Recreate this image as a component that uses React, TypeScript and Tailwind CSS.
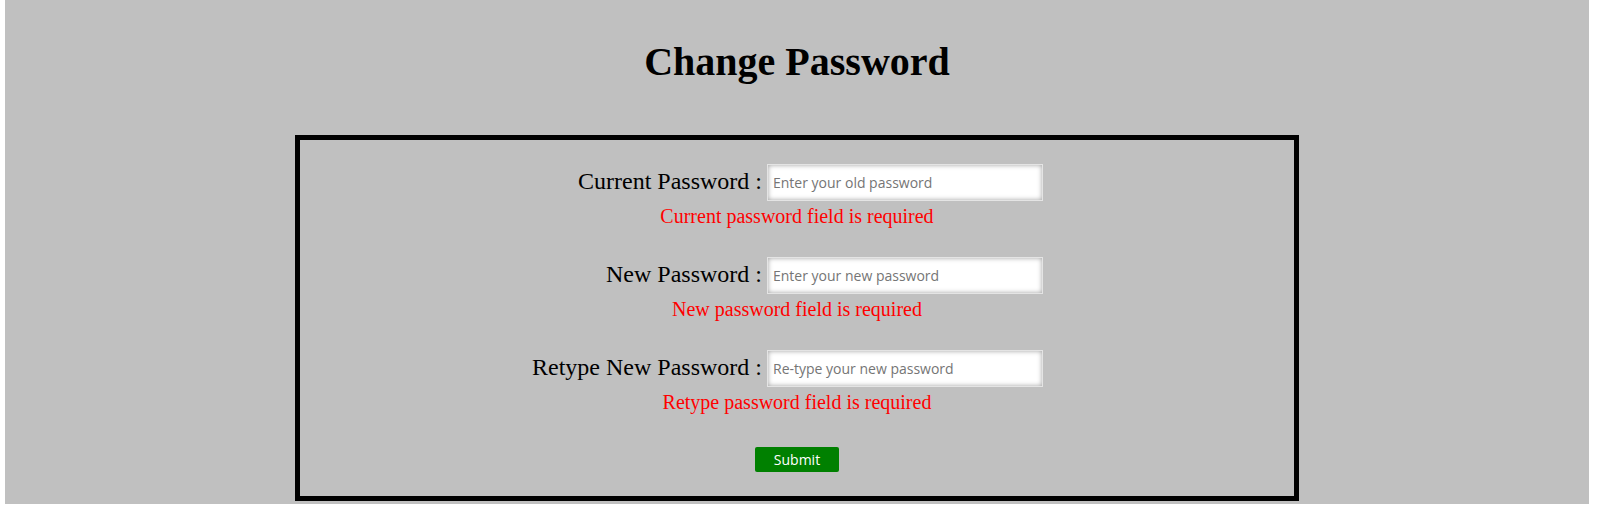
export default function App() {
  const fields = [
    { label: 'Current Password :', placeholder: 'Enter your old password', error: 'Current password field is required' },
    { label: 'New Password :', placeholder: 'Enter your new password', error: 'New password field is required' },
    { label: 'Retype New Password :', placeholder: 'Re-type your new password', error: 'Retype password field is required' },
  ]

  return (
    <div className="bg-white pl-[5px] pr-[8px]">
      <div className="bg-[#c0c0c0] pt-[39px] pb-[3px] font-['Liberation_Serif',serif] text-black">
        <h1 className="text-center text-[40px] font-bold leading-[46px]">Change Password</h1>

        <form className="mx-auto mt-[50px] w-[1004px] border-[5px] border-black pt-[24px] pb-[24px]">
          {fields.map((f, i) => (
            <div key={f.label} className={i > 0 ? 'mt-[29px]' : ''}>
              <div className="flex items-center">
                <label className="w-[462px] pb-[3px] text-right text-[24px] leading-[27px]">{f.label}</label>
                <input
                  type="password"
                  placeholder={f.placeholder}
                  className="ml-[5px] h-[37px] w-[276px] border border-[#e4e4e4] bg-white pl-[5px] font-['Open_Sans',sans-serif] text-[14px] shadow-[inset_0_0_5px_#a0a0a0] outline-none placeholder:text-[#757575]"
                />
              </div>
              <p className="mt-[4px] text-center text-[20px] leading-[23px] text-[#ff0000]">{f.error}</p>
            </div>
          ))}

          <div className="mt-[33px] flex justify-center">
            <button
              type="button"
              className="h-[25px] w-[84px] rounded-[2px] bg-[#008000] font-['Open_Sans',sans-serif] text-[14px] leading-none text-white"
            >
              Submit
            </button>
          </div>
        </form>
      </div>
    </div>
  )
}
